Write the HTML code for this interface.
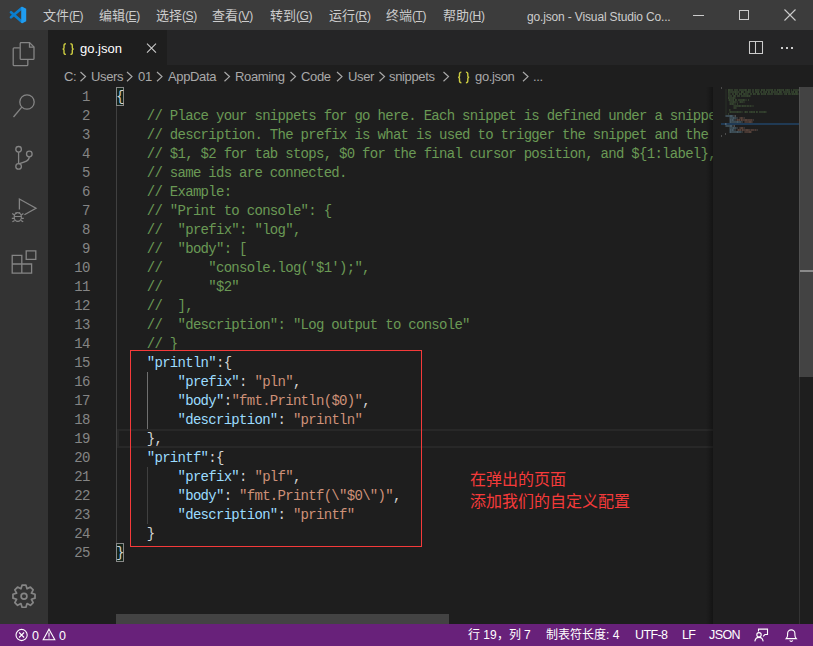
<!DOCTYPE html>
<html lang="zh-CN"><head><meta charset="utf-8">
<style>
*{margin:0;padding:0;box-sizing:border-box}
html,body{width:813px;height:646px;overflow:hidden;background:#1e1e1e;font-family:"Liberation Sans",sans-serif}
.abs{position:absolute}
#title{left:0;top:0;width:813px;height:30px;background:#3c3c3c;color:#cccccc;font-size:13px}
#title .m{position:absolute;top:8px;white-space:nowrap;line-height:16px}
#title .m small{font-size:12px;letter-spacing:-0.4px}
#act{left:0;top:30px;width:48px;height:594px;background:#333333}
#tabs{left:48px;top:30px;width:765px;height:35px;background:#252526}
#tab{left:48px;top:30px;width:119px;height:35px;background:#1e1e1e}
#bc{left:0;top:65px;width:813px;height:22px;color:#a9a9a9;font-size:13px}
#bc span{position:absolute;top:4px;letter-spacing:-0.35px;line-height:16px;white-space:nowrap}
#editor{left:48px;top:87px;width:765px;height:537px;background:#1e1e1e}
#status{left:0;top:624px;width:813px;height:22px;background:#68217a;color:#fff;font-size:12px}
#status span{position:absolute;top:3px;line-height:16px;white-space:nowrap}
.code{position:absolute;left:0;top:0;width:813px;height:646px;font-family:"Liberation Mono",monospace;font-size:14px;letter-spacing:-0.71px;white-space:pre;line-height:19px}
.ln{position:absolute;left:40px;width:49.7px;padding-top:1px;text-align:right;color:#858585}
.cl{position:absolute;left:116px}
.clip{position:absolute;left:116px;top:87px;width:597px;height:527px;overflow:hidden}
.clip .cl{left:0;padding-top:1px}
.c{color:#6a9955}.k{color:#9cdcfe}.s{color:#ce9178}.p{color:#d4d4d4}
.ig{position:absolute;width:1px;background:#404040}
</style></head><body>
<div id="title" class="abs">
  <svg class="abs" style="left:0;top:0" width="40" height="30"><g stroke-linecap="round"><path d="M11 12.3L21.6 21.6" stroke="#0a7fd0" stroke-width="2.7"/><path d="M21.6 8.2L11 17.2" stroke="#0a7fd0" stroke-width="2.7"/></g><path d="M21.2 7l1.2-0.2 3.8 1.9v12.6l-3.8 1.9-1.2-0.2z" fill="#1f9cf0"/></svg>
  <span class="m" style="left:43px">文件<small>(<u>F</u>)</small></span>
  <span class="m" style="left:99px">编辑<small>(<u>E</u>)</small></span>
  <span class="m" style="left:156px">选择<small>(<u>S</u>)</small></span>
  <span class="m" style="left:212px">查看<small>(<u>V</u>)</small></span>
  <span class="m" style="left:270px">转到<small>(<u>G</u>)</small></span>
  <span class="m" style="left:329px">运行<small>(<u>R</u>)</small></span>
  <span class="m" style="left:386px">终端<small>(<u>T</u>)</small></span>
  <span class="m" style="left:443px">帮助<small>(<u>H</u>)</small></span>
  <span class="m" style="left:527px;font-size:12px;top:9px;letter-spacing:-0.15px">go.json - Visual Studio Co...</span>
  <div class="abs" style="left:693px;top:15px;width:11px;height:1px;background:#ccc"></div>
  <div class="abs" style="left:739px;top:10px;width:10px;height:10px;border:1px solid #ccc"></div>
  <svg class="abs" style="left:784px;top:9px" width="12" height="12" viewBox="0 0 12 12"><path d="M0.5 0.5L11.5 11.5M11.5 0.5L0.5 11.5" stroke="#ccc" stroke-width="1.1"/></svg>
</div>
<div id="act" class="abs"></div>
<svg class="abs" style="left:0;top:30px" width="48" height="594" viewBox="0 30 48 594" fill="none" stroke="#858585" stroke-width="1.3">
  <!-- explorer -->
  <path d="M19.8 47.8h-5.6a1 1 0 0 0-1 1v15.9a1 1 0 0 0 1 1h12.6a1 1 0 0 0 1-1v-5.2"/>
  <path d="M20.2 42.6h9.3l4.5 4.5v11.3a1 1 0 0 1-1 1H21.2a1 1 0 0 1-1-1V43.6a1 1 0 0 1 1-1z"/>
  <path d="M29.5 42.6v4.5h4.5"/>
  <!-- search -->
  <circle cx="27" cy="102" r="7.2"/>
  <path d="M21.8 107.2L13.5 117"/>
  <!-- scm -->
  <circle cx="18.6" cy="149.3" r="2.8"/>
  <circle cx="18.6" cy="166.4" r="2.8"/>
  <circle cx="29.3" cy="154" r="2.8"/>
  <path d="M18.6 152.1v11.5"/>
  <path d="M29.3 156.8c0 4-4 5.5-10.7 7"/>
  <!-- run -->
  <path d="M19.4 209.5V199l16.6 9.2-11.6 6.5"/>
  <g stroke-width="1.2">
  <ellipse cx="17.8" cy="217" rx="3.6" ry="4.4"/>
  <path d="M14.2 216.5h7.2M12.2 213.5l2.2 1.6M23.4 213.5l-2.2 1.6M11.8 218.3h2.4M21.4 218.3h2.4M12.4 221.8l2.3-1.4M23.2 221.8l-2.3-1.4M15.6 212.3l1.2 1.2M20 212.3l-1.2 1.2"/>
  </g>
  <!-- extensions -->
  <path d="M12.2 255.4h9.6v8.6h-9.6zM12.2 264h9.6v9.2h-9.6zM21.8 264h9.8v9.2h-9.8zM26.2 250.8h9.6v8.6h-9.6z"/>
  <!-- gear -->
  <g transform="translate(24 596.2)" stroke-width="1.7" stroke-linejoin="round"><path d="M-3.06 -7.39 L-1.94 -11.03 L1.94 -11.03 L3.06 -7.39 L3.06 -7.39 L6.42 -9.17 L9.17 -6.42 L7.39 -3.06 L7.39 -3.06 L11.03 -1.94 L11.03 1.94 L7.39 3.06 L7.39 3.06 L9.17 6.42 L6.42 9.17 L3.06 7.39 L3.06 7.39 L1.94 11.03 L-1.94 11.03 L-3.06 7.39 L-3.06 7.39 L-6.42 9.17 L-9.17 6.42 L-7.39 3.06 L-7.39 3.06 L-11.03 1.94 L-11.03 -1.94 L-7.39 -3.06 L-7.39 -3.06 L-9.17 -6.42 L-6.42 -9.17 L-3.06 -7.39Z"/><circle r="2.9"/></g>
</svg>
<div id="tabs" class="abs"></div>
<div id="tab" class="abs"></div>
<svg class="abs" style="left:0;top:0" width="813" height="90">
  <path d="M65.9 43.8 c-1.4 0 -1.9 0.5 -1.9 1.9 v2.2 c0 1 -0.5 1.1 -1.4 1.1 c0.9 0 1.4 0.3 1.4 1.2 v2.3 c0 1.4 0.5 1.9 1.9 1.9 M70.4 43.8 c1.4 0 1.9 0.5 1.9 1.9 v2.2 c0 1 0.5 1.1 1.4 1.1 c-0.9 0 -1.4 0.3 -1.4 1.2 v2.3 c0 1.4 -0.5 1.9 -1.9 1.9" stroke="#cbcb41" stroke-width="1.4" fill="none"/>
  <path d="M147 43.6L156 52.6M156 43.6L147 52.6" stroke="#cccccc" stroke-width="1.05"/>
  <path d="M749.5 41.5h13v12h-13zM755.5 41.5v12" stroke="#cccccc" stroke-width="1.05" fill="none" stroke-linejoin="round"/>
  <rect x="781" y="47" width="2" height="2" fill="#ccc"/><rect x="786" y="47" width="2" height="2" fill="#ccc"/><rect x="791" y="47" width="2" height="2" fill="#ccc"/>
</svg>
<span class="abs" style="left:80px;top:41px;font-size:13px;color:#fff;line-height:16px">go.json</span>
<div id="bc" class="abs">
<span style="left:64px">C:</span>
<span style="left:91px">Users</span>
<span style="left:138px">01</span>
<span style="left:168px">AppData</span>
<span style="left:235px">Roaming</span>
<span style="left:301px">Code</span>
<span style="left:348px">User</span>
<span style="left:389px">snippets</span>
<span style="left:475px">go.json</span>
<span style="left:533px">...</span>
</div>
<svg class="abs" style="left:0;top:0" width="813" height="90">
<path d="M80.5 72l5 4.6-5 4.6" stroke="#a9a9a9" stroke-width="1.2" fill="none"/>
<path d="M127.0 72l5 4.6-5 4.6" stroke="#a9a9a9" stroke-width="1.2" fill="none"/>
<path d="M157.0 72l5 4.6-5 4.6" stroke="#a9a9a9" stroke-width="1.2" fill="none"/>
<path d="M224.5 72l5 4.6-5 4.6" stroke="#a9a9a9" stroke-width="1.2" fill="none"/>
<path d="M290.5 72l5 4.6-5 4.6" stroke="#a9a9a9" stroke-width="1.2" fill="none"/>
<path d="M337.0 72l5 4.6-5 4.6" stroke="#a9a9a9" stroke-width="1.2" fill="none"/>
<path d="M379.5 72l5 4.6-5 4.6" stroke="#a9a9a9" stroke-width="1.2" fill="none"/>
<path d="M443.5 72l5 4.6-5 4.6" stroke="#a9a9a9" stroke-width="1.2" fill="none"/>
<path d="M523.0 72l5 4.6-5 4.6" stroke="#a9a9a9" stroke-width="1.2" fill="none"/>
<path d="M461.4 72.1 c-1.4 0 -1.9 0.5 -1.9 1.9 v2.2 c0 1 -0.5 1.1 -1.4 1.1 c0.9 0 1.4 0.3 1.4 1.2 v2.3 c0 1.4 0.5 1.9 1.9 1.9 M465.9 72.1 c1.4 0 1.9 0.5 1.9 1.9 v2.2 c0 1 0.5 1.1 1.4 1.1 c-0.9 0 -1.4 0.3 -1.4 1.2 v2.3 c0 1.4 -0.5 1.9 -1.9 1.9" stroke="#cbcb41" stroke-width="1.4" fill="none"/>
</svg>
<!-- current line -->
<div class="abs" style="left:117px;top:429px;width:596px;height:19px;border:2px solid #282828;border-right:0"></div>
<!-- indent guides -->
<div class="ig" style="left:116px;top:106px;height:437px"></div>
<div class="ig" style="left:147px;top:372px;height:57px;background:#707070"></div>
<div class="ig" style="left:147px;top:467px;height:57px"></div>
<!-- bracket match -->
<div class="abs" style="left:116px;top:87px;width:8px;height:19px;border:1px solid #888;background:#13241a"></div>
<div class="abs" style="left:116px;top:543px;width:8px;height:19px;border:1px solid #888;background:#13241a"></div>
<div class="code">
<div class="ln" style="top:87px">1</div>
<div class="ln" style="top:106px">2</div>
<div class="ln" style="top:125px">3</div>
<div class="ln" style="top:144px">4</div>
<div class="ln" style="top:163px">5</div>
<div class="ln" style="top:182px">6</div>
<div class="ln" style="top:201px">7</div>
<div class="ln" style="top:220px">8</div>
<div class="ln" style="top:239px">9</div>
<div class="ln" style="top:258px">10</div>
<div class="ln" style="top:277px">11</div>
<div class="ln" style="top:296px">12</div>
<div class="ln" style="top:315px">13</div>
<div class="ln" style="top:334px">14</div>
<div class="ln" style="top:353px">15</div>
<div class="ln" style="top:372px">16</div>
<div class="ln" style="top:391px">17</div>
<div class="ln" style="top:410px">18</div>
<div class="ln" style="top:429px">19</div>
<div class="ln" style="top:448px">20</div>
<div class="ln" style="top:467px">21</div>
<div class="ln" style="top:486px">22</div>
<div class="ln" style="top:505px">23</div>
<div class="ln" style="top:524px">24</div>
<div class="ln" style="top:543px">25</div>
<div class="clip"><div class="cl" style="top:0px"><span class="p">{</span></div>
<div class="cl" style="top:19px">    <span class="c">// Place your snippets for go here. Each snippet is defined under a snippet name and has a prefix, body and </span></div>
<div class="cl" style="top:38px">    <span class="c">// description. The prefix is what is used to trigger the snippet and the body will be expanded and inserted. Possible variables are:</span></div>
<div class="cl" style="top:57px">    <span class="c">// $1, $2 for tab stops, $0 for the final cursor position, and ${1:label}, ${2:another} for placeholders. Placeholders with the </span></div>
<div class="cl" style="top:76px">    <span class="c">// same ids are connected.</span></div>
<div class="cl" style="top:95px">    <span class="c">// Example:</span></div>
<div class="cl" style="top:114px">    <span class="c">// "Print to console": {</span></div>
<div class="cl" style="top:133px">    <span class="c">//  "prefix": "log",</span></div>
<div class="cl" style="top:152px">    <span class="c">//  "body": [</span></div>
<div class="cl" style="top:171px">    <span class="c">//      "console.log('$1');",</span></div>
<div class="cl" style="top:190px">    <span class="c">//      "$2"</span></div>
<div class="cl" style="top:209px">    <span class="c">//  ],</span></div>
<div class="cl" style="top:228px">    <span class="c">//  "description": "Log output to console"</span></div>
<div class="cl" style="top:247px">    <span class="c">// }</span></div>
<div class="cl" style="top:266px">    <span class="k">"println"</span><span class="p">:{</span></div>
<div class="cl" style="top:285px">        <span class="k">"prefix"</span><span class="p">: </span><span class="s">"pln"</span><span class="p">,</span></div>
<div class="cl" style="top:304px">        <span class="k">"body"</span><span class="p">:</span><span class="s">"fmt.Println($0)"</span><span class="p">,</span></div>
<div class="cl" style="top:323px">        <span class="k">"description"</span><span class="p">: </span><span class="s">"println"</span></div>
<div class="cl" style="top:342px">    <span class="p">},</span></div>
<div class="cl" style="top:361px">    <span class="k">"printf"</span><span class="p">:{</span></div>
<div class="cl" style="top:380px">        <span class="k">"prefix"</span><span class="p">: </span><span class="s">"plf"</span><span class="p">,</span></div>
<div class="cl" style="top:399px">        <span class="k">"body"</span><span class="p">: </span><span class="s">"fmt.Printf(\"$0\")"</span><span class="p">,</span></div>
<div class="cl" style="top:418px">        <span class="k">"description"</span><span class="p">: </span><span class="s">"printf"</span></div>
<div class="cl" style="top:437px">    <span class="p">}</span></div>
<div class="cl" style="top:456px"><span class="p">}</span></div></div>
</div>
<div class="abs" style="left:721px;top:123px;width:78px;height:2px;background:#203a54"></div>
<svg class="abs" style="left:0;top:0" width="813" height="646">
<g>
<rect x="721" y="87.2" width="1" height="1.6" fill="#d4d4d4" fill-opacity="0.32"/>
<rect x="725" y="89.2" width="1" height="1.6" fill="#6a9955" fill-opacity="0.10"/>
<rect x="726" y="89.2" width="1" height="1.6" fill="#6a9955" fill-opacity="0.10"/>
<rect x="728" y="89.2" width="1" height="1.6" fill="#6a9955" fill-opacity="0.42"/>
<rect x="729" y="89.2" width="1" height="1.6" fill="#6a9955" fill-opacity="0.39"/>
<rect x="730" y="89.2" width="1" height="1.6" fill="#6a9955" fill-opacity="0.29"/>
<rect x="731" y="89.2" width="1" height="1.6" fill="#6a9955" fill-opacity="0.29"/>
<rect x="732" y="89.2" width="1" height="1.6" fill="#6a9955" fill-opacity="0.29"/>
<rect x="734" y="89.2" width="1" height="1.6" fill="#6a9955" fill-opacity="0.29"/>
<rect x="735" y="89.2" width="1" height="1.6" fill="#6a9955" fill-opacity="0.29"/>
<rect x="736" y="89.2" width="1" height="1.6" fill="#6a9955" fill-opacity="0.29"/>
<rect x="737" y="89.2" width="1" height="1.6" fill="#6a9955" fill-opacity="0.29"/>
<rect x="739" y="89.2" width="1" height="1.6" fill="#6a9955" fill-opacity="0.29"/>
<rect x="740" y="89.2" width="1" height="1.6" fill="#6a9955" fill-opacity="0.29"/>
<rect x="741" y="89.2" width="1" height="1.6" fill="#6a9955" fill-opacity="0.29"/>
<rect x="742" y="89.2" width="1" height="1.6" fill="#6a9955" fill-opacity="0.29"/>
<rect x="743" y="89.2" width="1" height="1.6" fill="#6a9955" fill-opacity="0.29"/>
<rect x="744" y="89.2" width="1" height="1.6" fill="#6a9955" fill-opacity="0.29"/>
<rect x="745" y="89.2" width="1" height="1.6" fill="#6a9955" fill-opacity="0.39"/>
<rect x="746" y="89.2" width="1" height="1.6" fill="#6a9955" fill-opacity="0.29"/>
<rect x="748" y="89.2" width="1" height="1.6" fill="#6a9955" fill-opacity="0.39"/>
<rect x="749" y="89.2" width="1" height="1.6" fill="#6a9955" fill-opacity="0.29"/>
<rect x="750" y="89.2" width="1" height="1.6" fill="#6a9955" fill-opacity="0.29"/>
<rect x="752" y="89.2" width="1" height="1.6" fill="#6a9955" fill-opacity="0.29"/>
<rect x="753" y="89.2" width="1" height="1.6" fill="#6a9955" fill-opacity="0.29"/>
<rect x="755" y="89.2" width="1" height="1.6" fill="#6a9955" fill-opacity="0.39"/>
<rect x="756" y="89.2" width="1" height="1.6" fill="#6a9955" fill-opacity="0.29"/>
<rect x="757" y="89.2" width="1" height="1.6" fill="#6a9955" fill-opacity="0.29"/>
<rect x="758" y="89.2" width="1" height="1.6" fill="#6a9955" fill-opacity="0.29"/>
<rect x="759" y="89.2" width="1" height="1.6" fill="#6a9955" fill-opacity="0.17"/>
<rect x="761" y="89.2" width="1" height="1.6" fill="#6a9955" fill-opacity="0.42"/>
<rect x="762" y="89.2" width="1" height="1.6" fill="#6a9955" fill-opacity="0.29"/>
<rect x="763" y="89.2" width="1" height="1.6" fill="#6a9955" fill-opacity="0.29"/>
<rect x="764" y="89.2" width="1" height="1.6" fill="#6a9955" fill-opacity="0.39"/>
<rect x="766" y="89.2" width="1" height="1.6" fill="#6a9955" fill-opacity="0.29"/>
<rect x="767" y="89.2" width="1" height="1.6" fill="#6a9955" fill-opacity="0.29"/>
<rect x="768" y="89.2" width="1" height="1.6" fill="#6a9955" fill-opacity="0.29"/>
<rect x="769" y="89.2" width="1" height="1.6" fill="#6a9955" fill-opacity="0.29"/>
<rect x="770" y="89.2" width="1" height="1.6" fill="#6a9955" fill-opacity="0.29"/>
<rect x="771" y="89.2" width="1" height="1.6" fill="#6a9955" fill-opacity="0.29"/>
<rect x="772" y="89.2" width="1" height="1.6" fill="#6a9955" fill-opacity="0.39"/>
<rect x="774" y="89.2" width="1" height="1.6" fill="#6a9955" fill-opacity="0.29"/>
<rect x="775" y="89.2" width="1" height="1.6" fill="#6a9955" fill-opacity="0.29"/>
<rect x="777" y="89.2" width="1" height="1.6" fill="#6a9955" fill-opacity="0.39"/>
<rect x="778" y="89.2" width="1" height="1.6" fill="#6a9955" fill-opacity="0.29"/>
<rect x="779" y="89.2" width="1" height="1.6" fill="#6a9955" fill-opacity="0.39"/>
<rect x="780" y="89.2" width="1" height="1.6" fill="#6a9955" fill-opacity="0.29"/>
<rect x="781" y="89.2" width="1" height="1.6" fill="#6a9955" fill-opacity="0.29"/>
<rect x="782" y="89.2" width="1" height="1.6" fill="#6a9955" fill-opacity="0.29"/>
<rect x="783" y="89.2" width="1" height="1.6" fill="#6a9955" fill-opacity="0.39"/>
<rect x="785" y="89.2" width="1" height="1.6" fill="#6a9955" fill-opacity="0.29"/>
<rect x="786" y="89.2" width="1" height="1.6" fill="#6a9955" fill-opacity="0.29"/>
<rect x="787" y="89.2" width="1" height="1.6" fill="#6a9955" fill-opacity="0.39"/>
<rect x="788" y="89.2" width="1" height="1.6" fill="#6a9955" fill-opacity="0.29"/>
<rect x="789" y="89.2" width="1" height="1.6" fill="#6a9955" fill-opacity="0.29"/>
<rect x="791" y="89.2" width="1" height="1.6" fill="#6a9955" fill-opacity="0.29"/>
<rect x="793" y="89.2" width="1" height="1.6" fill="#6a9955" fill-opacity="0.29"/>
<rect x="794" y="89.2" width="1" height="1.6" fill="#6a9955" fill-opacity="0.29"/>
<rect x="795" y="89.2" width="1" height="1.6" fill="#6a9955" fill-opacity="0.29"/>
<rect x="796" y="89.2" width="1" height="1.6" fill="#6a9955" fill-opacity="0.29"/>
<rect x="797" y="89.2" width="1" height="1.6" fill="#6a9955" fill-opacity="0.29"/>
<rect x="798" y="89.2" width="1" height="1.6" fill="#6a9955" fill-opacity="0.29"/>
<rect x="725" y="91.2" width="1" height="1.6" fill="#6a9955" fill-opacity="0.10"/>
<rect x="726" y="91.2" width="1" height="1.6" fill="#6a9955" fill-opacity="0.10"/>
<rect x="728" y="91.2" width="1" height="1.6" fill="#6a9955" fill-opacity="0.39"/>
<rect x="729" y="91.2" width="1" height="1.6" fill="#6a9955" fill-opacity="0.29"/>
<rect x="730" y="91.2" width="1" height="1.6" fill="#6a9955" fill-opacity="0.29"/>
<rect x="731" y="91.2" width="1" height="1.6" fill="#6a9955" fill-opacity="0.29"/>
<rect x="732" y="91.2" width="1" height="1.6" fill="#6a9955" fill-opacity="0.29"/>
<rect x="733" y="91.2" width="1" height="1.6" fill="#6a9955" fill-opacity="0.29"/>
<rect x="734" y="91.2" width="1" height="1.6" fill="#6a9955" fill-opacity="0.29"/>
<rect x="735" y="91.2" width="1" height="1.6" fill="#6a9955" fill-opacity="0.39"/>
<rect x="736" y="91.2" width="1" height="1.6" fill="#6a9955" fill-opacity="0.29"/>
<rect x="737" y="91.2" width="1" height="1.6" fill="#6a9955" fill-opacity="0.29"/>
<rect x="738" y="91.2" width="1" height="1.6" fill="#6a9955" fill-opacity="0.29"/>
<rect x="739" y="91.2" width="1" height="1.6" fill="#6a9955" fill-opacity="0.17"/>
<rect x="741" y="91.2" width="1" height="1.6" fill="#6a9955" fill-opacity="0.42"/>
<rect x="742" y="91.2" width="1" height="1.6" fill="#6a9955" fill-opacity="0.39"/>
<rect x="743" y="91.2" width="1" height="1.6" fill="#6a9955" fill-opacity="0.29"/>
<rect x="745" y="91.2" width="1" height="1.6" fill="#6a9955" fill-opacity="0.29"/>
<rect x="746" y="91.2" width="1" height="1.6" fill="#6a9955" fill-opacity="0.29"/>
<rect x="747" y="91.2" width="1" height="1.6" fill="#6a9955" fill-opacity="0.29"/>
<rect x="748" y="91.2" width="1" height="1.6" fill="#6a9955" fill-opacity="0.39"/>
<rect x="749" y="91.2" width="1" height="1.6" fill="#6a9955" fill-opacity="0.29"/>
<rect x="750" y="91.2" width="1" height="1.6" fill="#6a9955" fill-opacity="0.29"/>
<rect x="752" y="91.2" width="1" height="1.6" fill="#6a9955" fill-opacity="0.29"/>
<rect x="753" y="91.2" width="1" height="1.6" fill="#6a9955" fill-opacity="0.29"/>
<rect x="755" y="91.2" width="1" height="1.6" fill="#6a9955" fill-opacity="0.29"/>
<rect x="756" y="91.2" width="1" height="1.6" fill="#6a9955" fill-opacity="0.39"/>
<rect x="757" y="91.2" width="1" height="1.6" fill="#6a9955" fill-opacity="0.29"/>
<rect x="758" y="91.2" width="1" height="1.6" fill="#6a9955" fill-opacity="0.39"/>
<rect x="760" y="91.2" width="1" height="1.6" fill="#6a9955" fill-opacity="0.29"/>
<rect x="761" y="91.2" width="1" height="1.6" fill="#6a9955" fill-opacity="0.29"/>
<rect x="763" y="91.2" width="1" height="1.6" fill="#6a9955" fill-opacity="0.29"/>
<rect x="764" y="91.2" width="1" height="1.6" fill="#6a9955" fill-opacity="0.29"/>
<rect x="765" y="91.2" width="1" height="1.6" fill="#6a9955" fill-opacity="0.29"/>
<rect x="766" y="91.2" width="1" height="1.6" fill="#6a9955" fill-opacity="0.39"/>
<rect x="768" y="91.2" width="1" height="1.6" fill="#6a9955" fill-opacity="0.39"/>
<rect x="769" y="91.2" width="1" height="1.6" fill="#6a9955" fill-opacity="0.29"/>
<rect x="771" y="91.2" width="1" height="1.6" fill="#6a9955" fill-opacity="0.39"/>
<rect x="772" y="91.2" width="1" height="1.6" fill="#6a9955" fill-opacity="0.29"/>
<rect x="773" y="91.2" width="1" height="1.6" fill="#6a9955" fill-opacity="0.29"/>
<rect x="774" y="91.2" width="1" height="1.6" fill="#6a9955" fill-opacity="0.29"/>
<rect x="775" y="91.2" width="1" height="1.6" fill="#6a9955" fill-opacity="0.29"/>
<rect x="776" y="91.2" width="1" height="1.6" fill="#6a9955" fill-opacity="0.29"/>
<rect x="777" y="91.2" width="1" height="1.6" fill="#6a9955" fill-opacity="0.29"/>
<rect x="779" y="91.2" width="1" height="1.6" fill="#6a9955" fill-opacity="0.39"/>
<rect x="780" y="91.2" width="1" height="1.6" fill="#6a9955" fill-opacity="0.39"/>
<rect x="781" y="91.2" width="1" height="1.6" fill="#6a9955" fill-opacity="0.29"/>
<rect x="783" y="91.2" width="1" height="1.6" fill="#6a9955" fill-opacity="0.29"/>
<rect x="784" y="91.2" width="1" height="1.6" fill="#6a9955" fill-opacity="0.29"/>
<rect x="785" y="91.2" width="1" height="1.6" fill="#6a9955" fill-opacity="0.29"/>
<rect x="786" y="91.2" width="1" height="1.6" fill="#6a9955" fill-opacity="0.29"/>
<rect x="787" y="91.2" width="1" height="1.6" fill="#6a9955" fill-opacity="0.29"/>
<rect x="788" y="91.2" width="1" height="1.6" fill="#6a9955" fill-opacity="0.29"/>
<rect x="789" y="91.2" width="1" height="1.6" fill="#6a9955" fill-opacity="0.39"/>
<rect x="791" y="91.2" width="1" height="1.6" fill="#6a9955" fill-opacity="0.29"/>
<rect x="792" y="91.2" width="1" height="1.6" fill="#6a9955" fill-opacity="0.29"/>
<rect x="793" y="91.2" width="1" height="1.6" fill="#6a9955" fill-opacity="0.39"/>
<rect x="795" y="91.2" width="1" height="1.6" fill="#6a9955" fill-opacity="0.39"/>
<rect x="796" y="91.2" width="1" height="1.6" fill="#6a9955" fill-opacity="0.39"/>
<rect x="797" y="91.2" width="1" height="1.6" fill="#6a9955" fill-opacity="0.29"/>
<rect x="725" y="93.2" width="1" height="1.6" fill="#6a9955" fill-opacity="0.10"/>
<rect x="726" y="93.2" width="1" height="1.6" fill="#6a9955" fill-opacity="0.10"/>
<rect x="728" y="93.2" width="1" height="1.6" fill="#6a9955" fill-opacity="0.32"/>
<rect x="729" y="93.2" width="1" height="1.6" fill="#6a9955" fill-opacity="0.29"/>
<rect x="730" y="93.2" width="1" height="1.6" fill="#6a9955" fill-opacity="0.17"/>
<rect x="732" y="93.2" width="1" height="1.6" fill="#6a9955" fill-opacity="0.32"/>
<rect x="733" y="93.2" width="1" height="1.6" fill="#6a9955" fill-opacity="0.29"/>
<rect x="735" y="93.2" width="1" height="1.6" fill="#6a9955" fill-opacity="0.39"/>
<rect x="736" y="93.2" width="1" height="1.6" fill="#6a9955" fill-opacity="0.29"/>
<rect x="737" y="93.2" width="1" height="1.6" fill="#6a9955" fill-opacity="0.29"/>
<rect x="739" y="93.2" width="1" height="1.6" fill="#6a9955" fill-opacity="0.39"/>
<rect x="740" y="93.2" width="1" height="1.6" fill="#6a9955" fill-opacity="0.29"/>
<rect x="741" y="93.2" width="1" height="1.6" fill="#6a9955" fill-opacity="0.39"/>
<rect x="743" y="93.2" width="1" height="1.6" fill="#6a9955" fill-opacity="0.29"/>
<rect x="744" y="93.2" width="1" height="1.6" fill="#6a9955" fill-opacity="0.39"/>
<rect x="745" y="93.2" width="1" height="1.6" fill="#6a9955" fill-opacity="0.29"/>
<rect x="746" y="93.2" width="1" height="1.6" fill="#6a9955" fill-opacity="0.29"/>
<rect x="747" y="93.2" width="1" height="1.6" fill="#6a9955" fill-opacity="0.29"/>
<rect x="748" y="93.2" width="1" height="1.6" fill="#6a9955" fill-opacity="0.17"/>
<rect x="750" y="93.2" width="1" height="1.6" fill="#6a9955" fill-opacity="0.32"/>
<rect x="751" y="93.2" width="1" height="1.6" fill="#6a9955" fill-opacity="0.29"/>
<rect x="753" y="93.2" width="1" height="1.6" fill="#6a9955" fill-opacity="0.39"/>
<rect x="754" y="93.2" width="1" height="1.6" fill="#6a9955" fill-opacity="0.29"/>
<rect x="755" y="93.2" width="1" height="1.6" fill="#6a9955" fill-opacity="0.29"/>
<rect x="757" y="93.2" width="1" height="1.6" fill="#6a9955" fill-opacity="0.39"/>
<rect x="758" y="93.2" width="1" height="1.6" fill="#6a9955" fill-opacity="0.39"/>
<rect x="759" y="93.2" width="1" height="1.6" fill="#6a9955" fill-opacity="0.29"/>
<rect x="761" y="93.2" width="1" height="1.6" fill="#6a9955" fill-opacity="0.39"/>
<rect x="762" y="93.2" width="1" height="1.6" fill="#6a9955" fill-opacity="0.29"/>
<rect x="763" y="93.2" width="1" height="1.6" fill="#6a9955" fill-opacity="0.29"/>
<rect x="764" y="93.2" width="1" height="1.6" fill="#6a9955" fill-opacity="0.29"/>
<rect x="765" y="93.2" width="1" height="1.6" fill="#6a9955" fill-opacity="0.39"/>
<rect x="767" y="93.2" width="1" height="1.6" fill="#6a9955" fill-opacity="0.29"/>
<rect x="768" y="93.2" width="1" height="1.6" fill="#6a9955" fill-opacity="0.29"/>
<rect x="769" y="93.2" width="1" height="1.6" fill="#6a9955" fill-opacity="0.29"/>
<rect x="770" y="93.2" width="1" height="1.6" fill="#6a9955" fill-opacity="0.29"/>
<rect x="771" y="93.2" width="1" height="1.6" fill="#6a9955" fill-opacity="0.29"/>
<rect x="772" y="93.2" width="1" height="1.6" fill="#6a9955" fill-opacity="0.29"/>
<rect x="774" y="93.2" width="1" height="1.6" fill="#6a9955" fill-opacity="0.29"/>
<rect x="775" y="93.2" width="1" height="1.6" fill="#6a9955" fill-opacity="0.29"/>
<rect x="776" y="93.2" width="1" height="1.6" fill="#6a9955" fill-opacity="0.29"/>
<rect x="777" y="93.2" width="1" height="1.6" fill="#6a9955" fill-opacity="0.29"/>
<rect x="778" y="93.2" width="1" height="1.6" fill="#6a9955" fill-opacity="0.39"/>
<rect x="779" y="93.2" width="1" height="1.6" fill="#6a9955" fill-opacity="0.29"/>
<rect x="780" y="93.2" width="1" height="1.6" fill="#6a9955" fill-opacity="0.29"/>
<rect x="781" y="93.2" width="1" height="1.6" fill="#6a9955" fill-opacity="0.29"/>
<rect x="782" y="93.2" width="1" height="1.6" fill="#6a9955" fill-opacity="0.17"/>
<rect x="784" y="93.2" width="1" height="1.6" fill="#6a9955" fill-opacity="0.29"/>
<rect x="785" y="93.2" width="1" height="1.6" fill="#6a9955" fill-opacity="0.29"/>
<rect x="786" y="93.2" width="1" height="1.6" fill="#6a9955" fill-opacity="0.39"/>
<rect x="788" y="93.2" width="1" height="1.6" fill="#6a9955" fill-opacity="0.32"/>
<rect x="789" y="93.2" width="1" height="1.6" fill="#6a9955" fill-opacity="0.32"/>
<rect x="790" y="93.2" width="1" height="1.6" fill="#6a9955" fill-opacity="0.29"/>
<rect x="791" y="93.2" width="1" height="1.6" fill="#6a9955" fill-opacity="0.17"/>
<rect x="792" y="93.2" width="1" height="1.6" fill="#6a9955" fill-opacity="0.39"/>
<rect x="793" y="93.2" width="1" height="1.6" fill="#6a9955" fill-opacity="0.29"/>
<rect x="794" y="93.2" width="1" height="1.6" fill="#6a9955" fill-opacity="0.39"/>
<rect x="795" y="93.2" width="1" height="1.6" fill="#6a9955" fill-opacity="0.29"/>
<rect x="796" y="93.2" width="1" height="1.6" fill="#6a9955" fill-opacity="0.39"/>
<rect x="797" y="93.2" width="1" height="1.6" fill="#6a9955" fill-opacity="0.32"/>
<rect x="798" y="93.2" width="1" height="1.6" fill="#6a9955" fill-opacity="0.17"/>
<rect x="725" y="95.2" width="1" height="1.6" fill="#6a9955" fill-opacity="0.10"/>
<rect x="726" y="95.2" width="1" height="1.6" fill="#6a9955" fill-opacity="0.10"/>
<rect x="728" y="95.2" width="1" height="1.6" fill="#6a9955" fill-opacity="0.29"/>
<rect x="729" y="95.2" width="1" height="1.6" fill="#6a9955" fill-opacity="0.29"/>
<rect x="730" y="95.2" width="1" height="1.6" fill="#6a9955" fill-opacity="0.29"/>
<rect x="731" y="95.2" width="1" height="1.6" fill="#6a9955" fill-opacity="0.29"/>
<rect x="733" y="95.2" width="1" height="1.6" fill="#6a9955" fill-opacity="0.29"/>
<rect x="734" y="95.2" width="1" height="1.6" fill="#6a9955" fill-opacity="0.39"/>
<rect x="735" y="95.2" width="1" height="1.6" fill="#6a9955" fill-opacity="0.29"/>
<rect x="737" y="95.2" width="1" height="1.6" fill="#6a9955" fill-opacity="0.29"/>
<rect x="738" y="95.2" width="1" height="1.6" fill="#6a9955" fill-opacity="0.29"/>
<rect x="739" y="95.2" width="1" height="1.6" fill="#6a9955" fill-opacity="0.29"/>
<rect x="741" y="95.2" width="1" height="1.6" fill="#6a9955" fill-opacity="0.29"/>
<rect x="742" y="95.2" width="1" height="1.6" fill="#6a9955" fill-opacity="0.29"/>
<rect x="743" y="95.2" width="1" height="1.6" fill="#6a9955" fill-opacity="0.29"/>
<rect x="744" y="95.2" width="1" height="1.6" fill="#6a9955" fill-opacity="0.29"/>
<rect x="745" y="95.2" width="1" height="1.6" fill="#6a9955" fill-opacity="0.29"/>
<rect x="746" y="95.2" width="1" height="1.6" fill="#6a9955" fill-opacity="0.29"/>
<rect x="747" y="95.2" width="1" height="1.6" fill="#6a9955" fill-opacity="0.39"/>
<rect x="748" y="95.2" width="1" height="1.6" fill="#6a9955" fill-opacity="0.29"/>
<rect x="749" y="95.2" width="1" height="1.6" fill="#6a9955" fill-opacity="0.39"/>
<rect x="750" y="95.2" width="1" height="1.6" fill="#6a9955" fill-opacity="0.17"/>
<rect x="725" y="97.2" width="1" height="1.6" fill="#6a9955" fill-opacity="0.10"/>
<rect x="726" y="97.2" width="1" height="1.6" fill="#6a9955" fill-opacity="0.10"/>
<rect x="728" y="97.2" width="1" height="1.6" fill="#6a9955" fill-opacity="0.42"/>
<rect x="729" y="97.2" width="1" height="1.6" fill="#6a9955" fill-opacity="0.29"/>
<rect x="730" y="97.2" width="1" height="1.6" fill="#6a9955" fill-opacity="0.29"/>
<rect x="731" y="97.2" width="1" height="1.6" fill="#6a9955" fill-opacity="0.29"/>
<rect x="732" y="97.2" width="1" height="1.6" fill="#6a9955" fill-opacity="0.29"/>
<rect x="733" y="97.2" width="1" height="1.6" fill="#6a9955" fill-opacity="0.39"/>
<rect x="734" y="97.2" width="1" height="1.6" fill="#6a9955" fill-opacity="0.29"/>
<rect x="735" y="97.2" width="1" height="1.6" fill="#6a9955" fill-opacity="0.17"/>
<rect x="725" y="99.2" width="1" height="1.6" fill="#6a9955" fill-opacity="0.10"/>
<rect x="726" y="99.2" width="1" height="1.6" fill="#6a9955" fill-opacity="0.10"/>
<rect x="728" y="99.2" width="1" height="1.6" fill="#6a9955" fill-opacity="0.17"/>
<rect x="729" y="99.2" width="1" height="1.6" fill="#6a9955" fill-opacity="0.42"/>
<rect x="730" y="99.2" width="1" height="1.6" fill="#6a9955" fill-opacity="0.29"/>
<rect x="731" y="99.2" width="1" height="1.6" fill="#6a9955" fill-opacity="0.29"/>
<rect x="732" y="99.2" width="1" height="1.6" fill="#6a9955" fill-opacity="0.29"/>
<rect x="733" y="99.2" width="1" height="1.6" fill="#6a9955" fill-opacity="0.39"/>
<rect x="735" y="99.2" width="1" height="1.6" fill="#6a9955" fill-opacity="0.39"/>
<rect x="736" y="99.2" width="1" height="1.6" fill="#6a9955" fill-opacity="0.29"/>
<rect x="738" y="99.2" width="1" height="1.6" fill="#6a9955" fill-opacity="0.29"/>
<rect x="739" y="99.2" width="1" height="1.6" fill="#6a9955" fill-opacity="0.29"/>
<rect x="740" y="99.2" width="1" height="1.6" fill="#6a9955" fill-opacity="0.29"/>
<rect x="741" y="99.2" width="1" height="1.6" fill="#6a9955" fill-opacity="0.29"/>
<rect x="742" y="99.2" width="1" height="1.6" fill="#6a9955" fill-opacity="0.29"/>
<rect x="743" y="99.2" width="1" height="1.6" fill="#6a9955" fill-opacity="0.39"/>
<rect x="744" y="99.2" width="1" height="1.6" fill="#6a9955" fill-opacity="0.29"/>
<rect x="745" y="99.2" width="1" height="1.6" fill="#6a9955" fill-opacity="0.17"/>
<rect x="746" y="99.2" width="1" height="1.6" fill="#6a9955" fill-opacity="0.17"/>
<rect x="748" y="99.2" width="1" height="1.6" fill="#6a9955" fill-opacity="0.32"/>
<rect x="725" y="101.2" width="1" height="1.6" fill="#6a9955" fill-opacity="0.10"/>
<rect x="726" y="101.2" width="1" height="1.6" fill="#6a9955" fill-opacity="0.10"/>
<rect x="729" y="101.2" width="1" height="1.6" fill="#6a9955" fill-opacity="0.17"/>
<rect x="730" y="101.2" width="1" height="1.6" fill="#6a9955" fill-opacity="0.29"/>
<rect x="731" y="101.2" width="1" height="1.6" fill="#6a9955" fill-opacity="0.29"/>
<rect x="732" y="101.2" width="1" height="1.6" fill="#6a9955" fill-opacity="0.29"/>
<rect x="733" y="101.2" width="1" height="1.6" fill="#6a9955" fill-opacity="0.39"/>
<rect x="734" y="101.2" width="1" height="1.6" fill="#6a9955" fill-opacity="0.29"/>
<rect x="735" y="101.2" width="1" height="1.6" fill="#6a9955" fill-opacity="0.29"/>
<rect x="736" y="101.2" width="1" height="1.6" fill="#6a9955" fill-opacity="0.17"/>
<rect x="737" y="101.2" width="1" height="1.6" fill="#6a9955" fill-opacity="0.17"/>
<rect x="739" y="101.2" width="1" height="1.6" fill="#6a9955" fill-opacity="0.17"/>
<rect x="740" y="101.2" width="1" height="1.6" fill="#6a9955" fill-opacity="0.39"/>
<rect x="741" y="101.2" width="1" height="1.6" fill="#6a9955" fill-opacity="0.29"/>
<rect x="742" y="101.2" width="1" height="1.6" fill="#6a9955" fill-opacity="0.29"/>
<rect x="743" y="101.2" width="1" height="1.6" fill="#6a9955" fill-opacity="0.17"/>
<rect x="744" y="101.2" width="1" height="1.6" fill="#6a9955" fill-opacity="0.17"/>
<rect x="725" y="103.2" width="1" height="1.6" fill="#6a9955" fill-opacity="0.10"/>
<rect x="726" y="103.2" width="1" height="1.6" fill="#6a9955" fill-opacity="0.10"/>
<rect x="729" y="103.2" width="1" height="1.6" fill="#6a9955" fill-opacity="0.17"/>
<rect x="730" y="103.2" width="1" height="1.6" fill="#6a9955" fill-opacity="0.39"/>
<rect x="731" y="103.2" width="1" height="1.6" fill="#6a9955" fill-opacity="0.29"/>
<rect x="732" y="103.2" width="1" height="1.6" fill="#6a9955" fill-opacity="0.39"/>
<rect x="733" y="103.2" width="1" height="1.6" fill="#6a9955" fill-opacity="0.29"/>
<rect x="734" y="103.2" width="1" height="1.6" fill="#6a9955" fill-opacity="0.17"/>
<rect x="735" y="103.2" width="1" height="1.6" fill="#6a9955" fill-opacity="0.17"/>
<rect x="737" y="103.2" width="1" height="1.6" fill="#6a9955" fill-opacity="0.32"/>
<rect x="725" y="105.2" width="1" height="1.6" fill="#6a9955" fill-opacity="0.10"/>
<rect x="726" y="105.2" width="1" height="1.6" fill="#6a9955" fill-opacity="0.10"/>
<rect x="733" y="105.2" width="1" height="1.6" fill="#6a9955" fill-opacity="0.17"/>
<rect x="734" y="105.2" width="1" height="1.6" fill="#6a9955" fill-opacity="0.29"/>
<rect x="735" y="105.2" width="1" height="1.6" fill="#6a9955" fill-opacity="0.29"/>
<rect x="736" y="105.2" width="1" height="1.6" fill="#6a9955" fill-opacity="0.29"/>
<rect x="737" y="105.2" width="1" height="1.6" fill="#6a9955" fill-opacity="0.29"/>
<rect x="738" y="105.2" width="1" height="1.6" fill="#6a9955" fill-opacity="0.29"/>
<rect x="739" y="105.2" width="1" height="1.6" fill="#6a9955" fill-opacity="0.39"/>
<rect x="740" y="105.2" width="1" height="1.6" fill="#6a9955" fill-opacity="0.29"/>
<rect x="741" y="105.2" width="1" height="1.6" fill="#6a9955" fill-opacity="0.17"/>
<rect x="742" y="105.2" width="1" height="1.6" fill="#6a9955" fill-opacity="0.39"/>
<rect x="743" y="105.2" width="1" height="1.6" fill="#6a9955" fill-opacity="0.29"/>
<rect x="744" y="105.2" width="1" height="1.6" fill="#6a9955" fill-opacity="0.29"/>
<rect x="745" y="105.2" width="1" height="1.6" fill="#6a9955" fill-opacity="0.32"/>
<rect x="746" y="105.2" width="1" height="1.6" fill="#6a9955" fill-opacity="0.17"/>
<rect x="747" y="105.2" width="1" height="1.6" fill="#6a9955" fill-opacity="0.32"/>
<rect x="748" y="105.2" width="1" height="1.6" fill="#6a9955" fill-opacity="0.29"/>
<rect x="749" y="105.2" width="1" height="1.6" fill="#6a9955" fill-opacity="0.17"/>
<rect x="750" y="105.2" width="1" height="1.6" fill="#6a9955" fill-opacity="0.32"/>
<rect x="751" y="105.2" width="1" height="1.6" fill="#6a9955" fill-opacity="0.17"/>
<rect x="752" y="105.2" width="1" height="1.6" fill="#6a9955" fill-opacity="0.17"/>
<rect x="753" y="105.2" width="1" height="1.6" fill="#6a9955" fill-opacity="0.17"/>
<rect x="725" y="107.2" width="1" height="1.6" fill="#6a9955" fill-opacity="0.10"/>
<rect x="726" y="107.2" width="1" height="1.6" fill="#6a9955" fill-opacity="0.10"/>
<rect x="733" y="107.2" width="1" height="1.6" fill="#6a9955" fill-opacity="0.17"/>
<rect x="734" y="107.2" width="1" height="1.6" fill="#6a9955" fill-opacity="0.32"/>
<rect x="735" y="107.2" width="1" height="1.6" fill="#6a9955" fill-opacity="0.29"/>
<rect x="736" y="107.2" width="1" height="1.6" fill="#6a9955" fill-opacity="0.17"/>
<rect x="725" y="109.2" width="1" height="1.6" fill="#6a9955" fill-opacity="0.10"/>
<rect x="726" y="109.2" width="1" height="1.6" fill="#6a9955" fill-opacity="0.10"/>
<rect x="729" y="109.2" width="1" height="1.6" fill="#6a9955" fill-opacity="0.32"/>
<rect x="730" y="109.2" width="1" height="1.6" fill="#6a9955" fill-opacity="0.17"/>
<rect x="725" y="111.2" width="1" height="1.6" fill="#6a9955" fill-opacity="0.10"/>
<rect x="726" y="111.2" width="1" height="1.6" fill="#6a9955" fill-opacity="0.10"/>
<rect x="729" y="111.2" width="1" height="1.6" fill="#6a9955" fill-opacity="0.17"/>
<rect x="730" y="111.2" width="1" height="1.6" fill="#6a9955" fill-opacity="0.39"/>
<rect x="731" y="111.2" width="1" height="1.6" fill="#6a9955" fill-opacity="0.29"/>
<rect x="732" y="111.2" width="1" height="1.6" fill="#6a9955" fill-opacity="0.29"/>
<rect x="733" y="111.2" width="1" height="1.6" fill="#6a9955" fill-opacity="0.29"/>
<rect x="734" y="111.2" width="1" height="1.6" fill="#6a9955" fill-opacity="0.29"/>
<rect x="735" y="111.2" width="1" height="1.6" fill="#6a9955" fill-opacity="0.29"/>
<rect x="736" y="111.2" width="1" height="1.6" fill="#6a9955" fill-opacity="0.29"/>
<rect x="737" y="111.2" width="1" height="1.6" fill="#6a9955" fill-opacity="0.39"/>
<rect x="738" y="111.2" width="1" height="1.6" fill="#6a9955" fill-opacity="0.29"/>
<rect x="739" y="111.2" width="1" height="1.6" fill="#6a9955" fill-opacity="0.29"/>
<rect x="740" y="111.2" width="1" height="1.6" fill="#6a9955" fill-opacity="0.29"/>
<rect x="741" y="111.2" width="1" height="1.6" fill="#6a9955" fill-opacity="0.17"/>
<rect x="742" y="111.2" width="1" height="1.6" fill="#6a9955" fill-opacity="0.17"/>
<rect x="744" y="111.2" width="1" height="1.6" fill="#6a9955" fill-opacity="0.17"/>
<rect x="745" y="111.2" width="1" height="1.6" fill="#6a9955" fill-opacity="0.42"/>
<rect x="746" y="111.2" width="1" height="1.6" fill="#6a9955" fill-opacity="0.29"/>
<rect x="747" y="111.2" width="1" height="1.6" fill="#6a9955" fill-opacity="0.29"/>
<rect x="749" y="111.2" width="1" height="1.6" fill="#6a9955" fill-opacity="0.29"/>
<rect x="750" y="111.2" width="1" height="1.6" fill="#6a9955" fill-opacity="0.29"/>
<rect x="751" y="111.2" width="1" height="1.6" fill="#6a9955" fill-opacity="0.39"/>
<rect x="752" y="111.2" width="1" height="1.6" fill="#6a9955" fill-opacity="0.29"/>
<rect x="753" y="111.2" width="1" height="1.6" fill="#6a9955" fill-opacity="0.29"/>
<rect x="754" y="111.2" width="1" height="1.6" fill="#6a9955" fill-opacity="0.39"/>
<rect x="756" y="111.2" width="1" height="1.6" fill="#6a9955" fill-opacity="0.39"/>
<rect x="757" y="111.2" width="1" height="1.6" fill="#6a9955" fill-opacity="0.29"/>
<rect x="759" y="111.2" width="1" height="1.6" fill="#6a9955" fill-opacity="0.29"/>
<rect x="760" y="111.2" width="1" height="1.6" fill="#6a9955" fill-opacity="0.29"/>
<rect x="761" y="111.2" width="1" height="1.6" fill="#6a9955" fill-opacity="0.29"/>
<rect x="762" y="111.2" width="1" height="1.6" fill="#6a9955" fill-opacity="0.29"/>
<rect x="763" y="111.2" width="1" height="1.6" fill="#6a9955" fill-opacity="0.29"/>
<rect x="764" y="111.2" width="1" height="1.6" fill="#6a9955" fill-opacity="0.39"/>
<rect x="765" y="111.2" width="1" height="1.6" fill="#6a9955" fill-opacity="0.29"/>
<rect x="766" y="111.2" width="1" height="1.6" fill="#6a9955" fill-opacity="0.17"/>
<rect x="725" y="113.2" width="1" height="1.6" fill="#6a9955" fill-opacity="0.10"/>
<rect x="726" y="113.2" width="1" height="1.6" fill="#6a9955" fill-opacity="0.10"/>
<rect x="728" y="113.2" width="1" height="1.6" fill="#6a9955" fill-opacity="0.32"/>
<rect x="725" y="115.2" width="1" height="1.6" fill="#9cdcfe" fill-opacity="0.17"/>
<rect x="726" y="115.2" width="1" height="1.6" fill="#9cdcfe" fill-opacity="0.29"/>
<rect x="727" y="115.2" width="1" height="1.6" fill="#9cdcfe" fill-opacity="0.29"/>
<rect x="728" y="115.2" width="1" height="1.6" fill="#9cdcfe" fill-opacity="0.29"/>
<rect x="729" y="115.2" width="1" height="1.6" fill="#9cdcfe" fill-opacity="0.29"/>
<rect x="730" y="115.2" width="1" height="1.6" fill="#9cdcfe" fill-opacity="0.39"/>
<rect x="731" y="115.2" width="1" height="1.6" fill="#9cdcfe" fill-opacity="0.39"/>
<rect x="732" y="115.2" width="1" height="1.6" fill="#9cdcfe" fill-opacity="0.29"/>
<rect x="733" y="115.2" width="1" height="1.6" fill="#9cdcfe" fill-opacity="0.17"/>
<rect x="734" y="115.2" width="1" height="1.6" fill="#d4d4d4" fill-opacity="0.17"/>
<rect x="735" y="115.2" width="1" height="1.6" fill="#d4d4d4" fill-opacity="0.32"/>
<rect x="729" y="117.2" width="1" height="1.6" fill="#9cdcfe" fill-opacity="0.17"/>
<rect x="730" y="117.2" width="1" height="1.6" fill="#9cdcfe" fill-opacity="0.29"/>
<rect x="731" y="117.2" width="1" height="1.6" fill="#9cdcfe" fill-opacity="0.29"/>
<rect x="732" y="117.2" width="1" height="1.6" fill="#9cdcfe" fill-opacity="0.29"/>
<rect x="733" y="117.2" width="1" height="1.6" fill="#9cdcfe" fill-opacity="0.39"/>
<rect x="734" y="117.2" width="1" height="1.6" fill="#9cdcfe" fill-opacity="0.29"/>
<rect x="735" y="117.2" width="1" height="1.6" fill="#9cdcfe" fill-opacity="0.29"/>
<rect x="736" y="117.2" width="1" height="1.6" fill="#9cdcfe" fill-opacity="0.17"/>
<rect x="737" y="117.2" width="1" height="1.6" fill="#d4d4d4" fill-opacity="0.17"/>
<rect x="739" y="117.2" width="1" height="1.6" fill="#ce9178" fill-opacity="0.17"/>
<rect x="740" y="117.2" width="1" height="1.6" fill="#ce9178" fill-opacity="0.29"/>
<rect x="741" y="117.2" width="1" height="1.6" fill="#ce9178" fill-opacity="0.39"/>
<rect x="742" y="117.2" width="1" height="1.6" fill="#ce9178" fill-opacity="0.29"/>
<rect x="743" y="117.2" width="1" height="1.6" fill="#ce9178" fill-opacity="0.17"/>
<rect x="744" y="117.2" width="1" height="1.6" fill="#d4d4d4" fill-opacity="0.17"/>
<rect x="729" y="119.2" width="1" height="1.6" fill="#9cdcfe" fill-opacity="0.17"/>
<rect x="730" y="119.2" width="1" height="1.6" fill="#9cdcfe" fill-opacity="0.39"/>
<rect x="731" y="119.2" width="1" height="1.6" fill="#9cdcfe" fill-opacity="0.29"/>
<rect x="732" y="119.2" width="1" height="1.6" fill="#9cdcfe" fill-opacity="0.39"/>
<rect x="733" y="119.2" width="1" height="1.6" fill="#9cdcfe" fill-opacity="0.29"/>
<rect x="734" y="119.2" width="1" height="1.6" fill="#9cdcfe" fill-opacity="0.17"/>
<rect x="735" y="119.2" width="1" height="1.6" fill="#d4d4d4" fill-opacity="0.17"/>
<rect x="736" y="119.2" width="1" height="1.6" fill="#ce9178" fill-opacity="0.17"/>
<rect x="737" y="119.2" width="1" height="1.6" fill="#ce9178" fill-opacity="0.39"/>
<rect x="738" y="119.2" width="1" height="1.6" fill="#ce9178" fill-opacity="0.29"/>
<rect x="739" y="119.2" width="1" height="1.6" fill="#ce9178" fill-opacity="0.39"/>
<rect x="740" y="119.2" width="1" height="1.6" fill="#ce9178" fill-opacity="0.17"/>
<rect x="741" y="119.2" width="1" height="1.6" fill="#ce9178" fill-opacity="0.42"/>
<rect x="742" y="119.2" width="1" height="1.6" fill="#ce9178" fill-opacity="0.29"/>
<rect x="743" y="119.2" width="1" height="1.6" fill="#ce9178" fill-opacity="0.29"/>
<rect x="744" y="119.2" width="1" height="1.6" fill="#ce9178" fill-opacity="0.29"/>
<rect x="745" y="119.2" width="1" height="1.6" fill="#ce9178" fill-opacity="0.39"/>
<rect x="746" y="119.2" width="1" height="1.6" fill="#ce9178" fill-opacity="0.39"/>
<rect x="747" y="119.2" width="1" height="1.6" fill="#ce9178" fill-opacity="0.29"/>
<rect x="748" y="119.2" width="1" height="1.6" fill="#ce9178" fill-opacity="0.32"/>
<rect x="749" y="119.2" width="1" height="1.6" fill="#ce9178" fill-opacity="0.32"/>
<rect x="750" y="119.2" width="1" height="1.6" fill="#ce9178" fill-opacity="0.29"/>
<rect x="751" y="119.2" width="1" height="1.6" fill="#ce9178" fill-opacity="0.32"/>
<rect x="752" y="119.2" width="1" height="1.6" fill="#ce9178" fill-opacity="0.17"/>
<rect x="753" y="119.2" width="1" height="1.6" fill="#d4d4d4" fill-opacity="0.17"/>
<rect x="729" y="121.2" width="1" height="1.6" fill="#9cdcfe" fill-opacity="0.17"/>
<rect x="730" y="121.2" width="1" height="1.6" fill="#9cdcfe" fill-opacity="0.39"/>
<rect x="731" y="121.2" width="1" height="1.6" fill="#9cdcfe" fill-opacity="0.29"/>
<rect x="732" y="121.2" width="1" height="1.6" fill="#9cdcfe" fill-opacity="0.29"/>
<rect x="733" y="121.2" width="1" height="1.6" fill="#9cdcfe" fill-opacity="0.29"/>
<rect x="734" y="121.2" width="1" height="1.6" fill="#9cdcfe" fill-opacity="0.29"/>
<rect x="735" y="121.2" width="1" height="1.6" fill="#9cdcfe" fill-opacity="0.29"/>
<rect x="736" y="121.2" width="1" height="1.6" fill="#9cdcfe" fill-opacity="0.29"/>
<rect x="737" y="121.2" width="1" height="1.6" fill="#9cdcfe" fill-opacity="0.39"/>
<rect x="738" y="121.2" width="1" height="1.6" fill="#9cdcfe" fill-opacity="0.29"/>
<rect x="739" y="121.2" width="1" height="1.6" fill="#9cdcfe" fill-opacity="0.29"/>
<rect x="740" y="121.2" width="1" height="1.6" fill="#9cdcfe" fill-opacity="0.29"/>
<rect x="741" y="121.2" width="1" height="1.6" fill="#9cdcfe" fill-opacity="0.17"/>
<rect x="742" y="121.2" width="1" height="1.6" fill="#d4d4d4" fill-opacity="0.17"/>
<rect x="744" y="121.2" width="1" height="1.6" fill="#ce9178" fill-opacity="0.17"/>
<rect x="745" y="121.2" width="1" height="1.6" fill="#ce9178" fill-opacity="0.29"/>
<rect x="746" y="121.2" width="1" height="1.6" fill="#ce9178" fill-opacity="0.29"/>
<rect x="747" y="121.2" width="1" height="1.6" fill="#ce9178" fill-opacity="0.29"/>
<rect x="748" y="121.2" width="1" height="1.6" fill="#ce9178" fill-opacity="0.29"/>
<rect x="749" y="121.2" width="1" height="1.6" fill="#ce9178" fill-opacity="0.39"/>
<rect x="750" y="121.2" width="1" height="1.6" fill="#ce9178" fill-opacity="0.39"/>
<rect x="751" y="121.2" width="1" height="1.6" fill="#ce9178" fill-opacity="0.29"/>
<rect x="752" y="121.2" width="1" height="1.6" fill="#ce9178" fill-opacity="0.17"/>
<rect x="725" y="123.2" width="1" height="1.6" fill="#d4d4d4" fill-opacity="0.32"/>
<rect x="726" y="123.2" width="1" height="1.6" fill="#d4d4d4" fill-opacity="0.17"/>
<rect x="725" y="125.2" width="1" height="1.6" fill="#9cdcfe" fill-opacity="0.17"/>
<rect x="726" y="125.2" width="1" height="1.6" fill="#9cdcfe" fill-opacity="0.29"/>
<rect x="727" y="125.2" width="1" height="1.6" fill="#9cdcfe" fill-opacity="0.29"/>
<rect x="728" y="125.2" width="1" height="1.6" fill="#9cdcfe" fill-opacity="0.29"/>
<rect x="729" y="125.2" width="1" height="1.6" fill="#9cdcfe" fill-opacity="0.29"/>
<rect x="730" y="125.2" width="1" height="1.6" fill="#9cdcfe" fill-opacity="0.39"/>
<rect x="731" y="125.2" width="1" height="1.6" fill="#9cdcfe" fill-opacity="0.39"/>
<rect x="732" y="125.2" width="1" height="1.6" fill="#9cdcfe" fill-opacity="0.17"/>
<rect x="733" y="125.2" width="1" height="1.6" fill="#d4d4d4" fill-opacity="0.17"/>
<rect x="734" y="125.2" width="1" height="1.6" fill="#d4d4d4" fill-opacity="0.32"/>
<rect x="729" y="127.2" width="1" height="1.6" fill="#9cdcfe" fill-opacity="0.17"/>
<rect x="730" y="127.2" width="1" height="1.6" fill="#9cdcfe" fill-opacity="0.29"/>
<rect x="731" y="127.2" width="1" height="1.6" fill="#9cdcfe" fill-opacity="0.29"/>
<rect x="732" y="127.2" width="1" height="1.6" fill="#9cdcfe" fill-opacity="0.29"/>
<rect x="733" y="127.2" width="1" height="1.6" fill="#9cdcfe" fill-opacity="0.39"/>
<rect x="734" y="127.2" width="1" height="1.6" fill="#9cdcfe" fill-opacity="0.29"/>
<rect x="735" y="127.2" width="1" height="1.6" fill="#9cdcfe" fill-opacity="0.29"/>
<rect x="736" y="127.2" width="1" height="1.6" fill="#9cdcfe" fill-opacity="0.17"/>
<rect x="737" y="127.2" width="1" height="1.6" fill="#d4d4d4" fill-opacity="0.17"/>
<rect x="739" y="127.2" width="1" height="1.6" fill="#ce9178" fill-opacity="0.17"/>
<rect x="740" y="127.2" width="1" height="1.6" fill="#ce9178" fill-opacity="0.29"/>
<rect x="741" y="127.2" width="1" height="1.6" fill="#ce9178" fill-opacity="0.39"/>
<rect x="742" y="127.2" width="1" height="1.6" fill="#ce9178" fill-opacity="0.39"/>
<rect x="743" y="127.2" width="1" height="1.6" fill="#ce9178" fill-opacity="0.17"/>
<rect x="744" y="127.2" width="1" height="1.6" fill="#d4d4d4" fill-opacity="0.17"/>
<rect x="729" y="129.2" width="1" height="1.6" fill="#9cdcfe" fill-opacity="0.17"/>
<rect x="730" y="129.2" width="1" height="1.6" fill="#9cdcfe" fill-opacity="0.39"/>
<rect x="731" y="129.2" width="1" height="1.6" fill="#9cdcfe" fill-opacity="0.29"/>
<rect x="732" y="129.2" width="1" height="1.6" fill="#9cdcfe" fill-opacity="0.39"/>
<rect x="733" y="129.2" width="1" height="1.6" fill="#9cdcfe" fill-opacity="0.29"/>
<rect x="734" y="129.2" width="1" height="1.6" fill="#9cdcfe" fill-opacity="0.17"/>
<rect x="735" y="129.2" width="1" height="1.6" fill="#d4d4d4" fill-opacity="0.17"/>
<rect x="737" y="129.2" width="1" height="1.6" fill="#ce9178" fill-opacity="0.17"/>
<rect x="738" y="129.2" width="1" height="1.6" fill="#ce9178" fill-opacity="0.39"/>
<rect x="739" y="129.2" width="1" height="1.6" fill="#ce9178" fill-opacity="0.29"/>
<rect x="740" y="129.2" width="1" height="1.6" fill="#ce9178" fill-opacity="0.39"/>
<rect x="741" y="129.2" width="1" height="1.6" fill="#ce9178" fill-opacity="0.17"/>
<rect x="742" y="129.2" width="1" height="1.6" fill="#ce9178" fill-opacity="0.42"/>
<rect x="743" y="129.2" width="1" height="1.6" fill="#ce9178" fill-opacity="0.29"/>
<rect x="744" y="129.2" width="1" height="1.6" fill="#ce9178" fill-opacity="0.29"/>
<rect x="745" y="129.2" width="1" height="1.6" fill="#ce9178" fill-opacity="0.29"/>
<rect x="746" y="129.2" width="1" height="1.6" fill="#ce9178" fill-opacity="0.39"/>
<rect x="747" y="129.2" width="1" height="1.6" fill="#ce9178" fill-opacity="0.39"/>
<rect x="748" y="129.2" width="1" height="1.6" fill="#ce9178" fill-opacity="0.32"/>
<rect x="749" y="129.2" width="1" height="1.6" fill="#ce9178" fill-opacity="0.29"/>
<rect x="750" y="129.2" width="1" height="1.6" fill="#ce9178" fill-opacity="0.17"/>
<rect x="751" y="129.2" width="1" height="1.6" fill="#ce9178" fill-opacity="0.32"/>
<rect x="752" y="129.2" width="1" height="1.6" fill="#ce9178" fill-opacity="0.29"/>
<rect x="753" y="129.2" width="1" height="1.6" fill="#ce9178" fill-opacity="0.29"/>
<rect x="754" y="129.2" width="1" height="1.6" fill="#ce9178" fill-opacity="0.17"/>
<rect x="755" y="129.2" width="1" height="1.6" fill="#ce9178" fill-opacity="0.32"/>
<rect x="756" y="129.2" width="1" height="1.6" fill="#ce9178" fill-opacity="0.17"/>
<rect x="757" y="129.2" width="1" height="1.6" fill="#d4d4d4" fill-opacity="0.17"/>
<rect x="729" y="131.2" width="1" height="1.6" fill="#9cdcfe" fill-opacity="0.17"/>
<rect x="730" y="131.2" width="1" height="1.6" fill="#9cdcfe" fill-opacity="0.39"/>
<rect x="731" y="131.2" width="1" height="1.6" fill="#9cdcfe" fill-opacity="0.29"/>
<rect x="732" y="131.2" width="1" height="1.6" fill="#9cdcfe" fill-opacity="0.29"/>
<rect x="733" y="131.2" width="1" height="1.6" fill="#9cdcfe" fill-opacity="0.29"/>
<rect x="734" y="131.2" width="1" height="1.6" fill="#9cdcfe" fill-opacity="0.29"/>
<rect x="735" y="131.2" width="1" height="1.6" fill="#9cdcfe" fill-opacity="0.29"/>
<rect x="736" y="131.2" width="1" height="1.6" fill="#9cdcfe" fill-opacity="0.29"/>
<rect x="737" y="131.2" width="1" height="1.6" fill="#9cdcfe" fill-opacity="0.39"/>
<rect x="738" y="131.2" width="1" height="1.6" fill="#9cdcfe" fill-opacity="0.29"/>
<rect x="739" y="131.2" width="1" height="1.6" fill="#9cdcfe" fill-opacity="0.29"/>
<rect x="740" y="131.2" width="1" height="1.6" fill="#9cdcfe" fill-opacity="0.29"/>
<rect x="741" y="131.2" width="1" height="1.6" fill="#9cdcfe" fill-opacity="0.17"/>
<rect x="742" y="131.2" width="1" height="1.6" fill="#d4d4d4" fill-opacity="0.17"/>
<rect x="744" y="131.2" width="1" height="1.6" fill="#ce9178" fill-opacity="0.17"/>
<rect x="745" y="131.2" width="1" height="1.6" fill="#ce9178" fill-opacity="0.29"/>
<rect x="746" y="131.2" width="1" height="1.6" fill="#ce9178" fill-opacity="0.29"/>
<rect x="747" y="131.2" width="1" height="1.6" fill="#ce9178" fill-opacity="0.29"/>
<rect x="748" y="131.2" width="1" height="1.6" fill="#ce9178" fill-opacity="0.29"/>
<rect x="749" y="131.2" width="1" height="1.6" fill="#ce9178" fill-opacity="0.39"/>
<rect x="750" y="131.2" width="1" height="1.6" fill="#ce9178" fill-opacity="0.39"/>
<rect x="751" y="131.2" width="1" height="1.6" fill="#ce9178" fill-opacity="0.17"/>
<rect x="725" y="133.2" width="1" height="1.6" fill="#d4d4d4" fill-opacity="0.32"/>
<rect x="721" y="135.2" width="1" height="1.6" fill="#d4d4d4" fill-opacity="0.32"/>
</g>
</svg>
<div class="abs" style="left:706px;top:87px;width:7px;height:537px;background:linear-gradient(to right,rgba(0,0,0,0),rgba(0,0,0,0.32))"></div>
<!-- scrollbars -->
<div class="abs" style="left:799px;top:87px;width:14px;height:290px;background:#434343"></div>
<div class="abs" style="left:799px;top:87px;width:1px;height:537px;background:rgba(127,127,127,0.22)"></div>
<div class="abs" style="left:800px;top:270px;width:13px;height:2px;background:#8a8a8a"></div>
<div class="abs" style="left:116px;top:614px;width:333px;height:10px;background:#434343"></div>
<!-- annotation -->
<div class="abs" style="left:130px;top:350px;width:292px;height:197px;border:1px solid #f53a3a"></div>
<div class="abs" style="left:470px;top:469px;font-size:16px;line-height:22px;color:#f53a3a;white-space:nowrap">在弹出的页面<br>添加我们的自定义配置</div>
<div id="status" class="abs">
<svg class="abs" style="left:0;top:0" width="813" height="22" fill="none" stroke="#fff" stroke-width="1.1">
 <circle cx="21.6" cy="11" r="5.6"/>
 <path d="M19.1 8.5l5 5M24.1 8.5l-5 5"/>
 <path d="M49 5.2l5.8 10.6H43.2z M49 8.6v4.2 M49 13.6v1"/>
 <path d="M758.5 7.5v-2.4h9v5.4h-2.6l-1.8 1.8" />
 <circle cx="759" cy="10.8" r="2.2"/><path d="M754.8 17.3c0.5-2.6 2-3.9 4.2-3.9s3.7 1.3 4.2 3.9"/>
 <path d="M786.2 14.6c1-1 1.4-2 1.4-3.5v-1.6a3.65 3.65 0 0 1 7.3 0v1.6c0 1.5 0.4 2.5 1.4 3.5z M789.8 16.4a1.5 1.3 0 0 0 2.9 0"/>
</svg>
<span style="left:32px;top:4px;font-size:12.5px">0</span>
<span style="left:59px;top:4px;font-size:12.5px">0</span>
<span style="left:468px">行 19，列 7</span>
<span style="left:546px">制表符长度: 4</span>
<span style="left:635px;font-size:12.5px;letter-spacing:-0.6px">UTF-8</span>
<span style="left:682px;font-size:12.5px;letter-spacing:-0.6px">LF</span>
<span style="left:709px;font-size:12.5px;letter-spacing:-0.6px">JSON</span>
</div>
</body></html>
